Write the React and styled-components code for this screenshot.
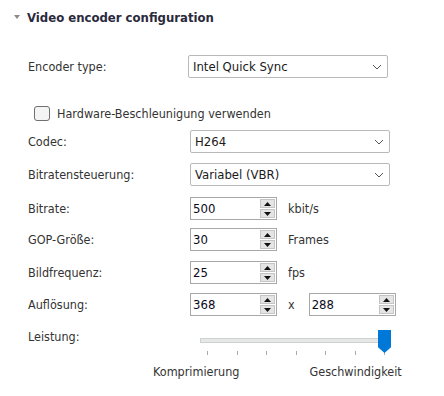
import React from "react";
import styled, { createGlobalStyle } from "styled-components";

const GlobalStyle = createGlobalStyle`
  body {
    margin: 0;
    background: #ffffff;
    font-family: "DejaVu Sans Condensed", "DejaVu Sans", sans-serif;
    font-size: 12.5px;
    color: #333333;
  }
`;

function Chevron() {
  return (
    <svg width="10" height="6" viewBox="0 0 10 6">
      <path d="M1 1 L5 5 L9 1" fill="none" stroke="#555" strokeWidth="1" />
    </svg>
  );
}

function Select({ value }) {
  return (
    <SelectBox>
      <span>{value}</span>
      <Chevron />
    </SelectBox>
  );
}

function Spin({ value }) {
  return (
    <SpinBox>
      <SpinValue>{value}</SpinValue>
      <SpinButtons>
        <SpinBtn>
          <svg width="7" height="4" viewBox="0 0 7 4">
            <path d="M0 4 L3.5 0 L7 4 Z" fill="#111" />
          </svg>
        </SpinBtn>
        <SpinBtn>
          <svg width="7" height="4" viewBox="0 0 7 4">
            <path d="M0 0 L3.5 4 L7 0 Z" fill="#111" />
          </svg>
        </SpinBtn>
      </SpinButtons>
    </SpinBox>
  );
}

function App() {
  const ticks = [0, 1, 2, 3, 4, 5, 6];
  return (
    <>
      <GlobalStyle />
      <Panel>
        <Header>
          <Caret />
          <Title>Video encoder configuration</Title>
        </Header>

        <Row top={31}>
          <Label>Encoder type:</Label>
          <Control shift={-2}>
            <Select value="Intel Quick Sync" />
          </Control>
        </Row>

        <CheckRow>
          <CheckBox />
          <CheckLabel>Hardware-Beschleunigung verwenden</CheckLabel>
        </CheckRow>

        <Row top={9}>
          <Label>Codec:</Label>
          <Control>
            <Select value="H264" />
          </Control>
        </Row>
        <Row top={10}>
          <Label>Bitratensteuerung:</Label>
          <Control>
            <Select value="Variabel (VBR)" />
          </Control>
        </Row>
        <Row top={11}>
          <Label>Bitrate:</Label>
          <Control>
            <Spin value="500" />
            <Unit>kbit/s</Unit>
          </Control>
        </Row>
        <Row top={8}>
          <Label>GOP-Größe:</Label>
          <Control>
            <Spin value="30" />
            <Unit>Frames</Unit>
          </Control>
        </Row>
        <Row top={10}>
          <Label>Bildfrequenz:</Label>
          <Control>
            <Spin value="25" />
            <Unit>fps</Unit>
          </Control>
        </Row>
        <Row top={9}>
          <Label>Auflösung:</Label>
          <Control>
            <Spin value="368" />
            <Unit>x</Unit>
            <Spin value="288" />
          </Control>
        </Row>

        <SliderRow>
          <Label>Leistung:</Label>
          <SliderArea>
            <Track>
              <Thumb />
            </Track>
            <Ticks>
              {ticks.map((t) => (
                <Tick key={t} />
              ))}
            </Ticks>
          </SliderArea>
        </SliderRow>
        <Legend>
          <span>Komprimierung</span>
          <span>Geschwindigkeit</span>
        </Legend>
      </Panel>
    </>
  );
}

const Panel = styled.div`
  width: 444px;
  height: 396px;
  padding: 10px 0 0 0;
  box-sizing: border-box;
  overflow: hidden;
`;

const Header = styled.div`
  display: flex;
  align-items: center;
  height: 14px;
  padding-left: 14px;
  gap: 7px;
`;

const Caret = styled.span`
  width: 0;
  height: 0;
  border-left: 3px solid transparent;
  border-right: 3px solid transparent;
  border-top: 4px solid #8a8a8a;
`;

const Title = styled.span`
  font-weight: bold;
  font-size: 13px;
  color: #2a2a3c;
`;

const Row = styled.div`
  display: flex;
  align-items: center;
  height: 23px;
  margin-top: ${(p) => p.top}px;
  padding-left: 28px;
`;

const Label = styled.div`
  width: 162px;
  flex-shrink: 0;
`;

const Control = styled.div`
  display: flex;
  align-items: center;
  margin-left: ${(p) => p.shift || 0}px;
`;

const SelectBox = styled.div`
  box-sizing: border-box;
  width: 200px;
  height: 23px;
  border: 1px solid #b9b9b9;
  border-radius: 2px;
  display: flex;
  align-items: center;
  justify-content: space-between;
  padding: 0 5px 0 4px;
  color: #1a1a1a;
  font-size: 13px;
`;

const SpinBox = styled.div`
  box-sizing: border-box;
  width: 87px;
  height: 23px;
  border: 1px solid #a8a8a8;
  display: flex;
  align-items: center;
  justify-content: space-between;
  padding: 0 1px 0 2px;
`;

const SpinValue = styled.span`
  color: #0a0a1a;
  font-size: 13px;
`;

const SpinButtons = styled.div`
  display: flex;
  flex-direction: column;
  gap: 1px;
`;

const SpinBtn = styled.div`
  width: 15px;
  height: 9px;
  background: #e4e4e4;
  border: 1px solid #c4c4c4;
  box-sizing: border-box;
  display: flex;
  align-items: center;
  justify-content: center;
`;

const Unit = styled.span`
  margin: 0 14px 0 11px;
  color: #333;
`;

const CheckRow = styled.div`
  display: flex;
  align-items: center;
  gap: 7px;
  height: 16px;
  margin-top: 27px;
  padding-left: 34px;
`;

const CheckBox = styled.span`
  box-sizing: border-box;
  width: 16px;
  height: 15px;
  border: 1px solid #707070;
  border-radius: 3px;
  background: #f4f4f4;
`;

const CheckLabel = styled.span`
  color: #333;
`;

const SliderRow = styled.div`
  display: flex;
  align-items: flex-start;
  margin-top: 13px;
  padding-left: 28px;
`;

const SliderArea = styled.div`
  display: flex;
  flex-direction: column;
  margin-left: 10px;
  width: 191px;
  padding-top: 9px;
`;

const Track = styled.div`
  position: relative;
  height: 5px;
  box-sizing: border-box;
  background: #e6e8e8;
  border: 1px solid #cfd1d1;
`;

const Thumb = styled.div`
  position: absolute;
  right: -1px;
  top: -9px;
  width: 13px;
  height: 23px;
  background: #0078d7;
  clip-path: polygon(0 0, 100% 0, 100% 75%, 50% 100%, 0 75%);
`;

const Ticks = styled.div`
  display: flex;
  justify-content: space-between;
  padding: 0 6px 0 7px;
  margin-top: 8px;
`;

const Tick = styled.span`
  width: 1px;
  height: 4px;
  background: #aaa;
`;

const Legend = styled.div`
  display: flex;
  padding-left: 153px;
  gap: 70px;
  margin-top: 9px;
  color: #333;
`;

export default App;
